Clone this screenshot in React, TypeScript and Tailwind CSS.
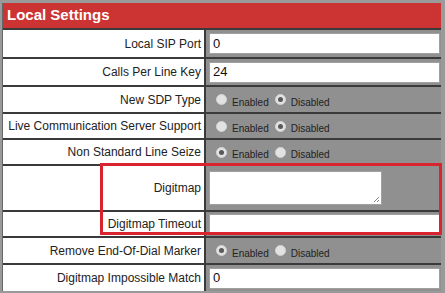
import React from "react";

type Row =
  | { label: string; kind: "input"; value: string; h: string }
  | { label: string; kind: "radio"; enabled: boolean; h: string }
  | { label: string; kind: "textarea"; h: string };

const ROWS: Row[] = [
  { label: "Local SIP Port", kind: "input", value: "0", h: "h-[29px]" },
  { label: "Calls Per Line Key", kind: "input", value: "24", h: "h-[28px]" },
  { label: "New SDP Type", kind: "radio", enabled: false, h: "h-[27px]" },
  { label: "Live Communication Server Support", kind: "radio", enabled: false, h: "h-[26px]" },
  { label: "Non Standard Line Seize", kind: "radio", enabled: true, h: "h-[26px]" },
  { label: "Digitmap", kind: "textarea", h: "h-[46px]" },
  { label: "Digitmap Timeout", kind: "input", value: "", h: "h-[26px]" },
  { label: "Remove End-Of-Dial Marker", kind: "radio", enabled: true, h: "h-[27px]" },
  { label: "Digitmap Impossible Match", kind: "input", value: "0", h: "h-[28px]" },
];

function Radio({ on }: { on: boolean }) {
  return (
    <span className="flex h-[11px] w-[11px] items-center justify-center rounded-full border border-[#d4d4d4] bg-[#e2e2e2]">
      {on && <span className="h-[5px] w-[5px] rounded-full bg-[#5a5a5a]" />}
    </span>
  );
}

function Value({ row }: { row: Row }) {
  if (row.kind === "input") {
    return (
      <div className="flex h-[21px] w-full items-center border border-[#a0a0a0] bg-white px-[3px] text-[13px] text-[#111]">
        {row.value}
      </div>
    );
  }
  if (row.kind === "textarea") {
    return (
      <div className="relative h-[34px] w-[173px] border border-[#a0a0a0] bg-white">
        <svg className="absolute bottom-[1px] right-[1px]" width="7" height="7" viewBox="0 0 7 7">
          <path d="M6 1L1 6M6 4L4 6" stroke="#888" strokeWidth="1" />
        </svg>
      </div>
    );
  }
  return (
    <div className="flex items-center pl-[7px] text-[10px] text-[#222]">
      <Radio on={row.enabled} />
      <span className="mt-[5px] ml-[5px] mr-[6px]">Enabled</span>
      <Radio on={!row.enabled} />
      <span className="mt-[5px] ml-[5px]">Disabled</span>
    </div>
  );
}

export default function App() {
  return (
    <div className="relative h-[293px] w-[445px] overflow-hidden bg-[#9a9a9a] font-['Liberation_Sans',Arial,sans-serif]">
      <div className="ml-[2px] mt-[3px] w-[439px] border-l border-[#666]">
        <div className="flex h-[25px] items-center bg-[#cc3333] pl-[4px] text-[15px] font-bold text-white">
          Local Settings
        </div>
        {ROWS.map((row) => (
          <div key={row.label} className={`grid grid-cols-[203px_1fr] border-t-2 border-[#3a3a3a] ${row.h}`}>
            <div className="flex items-center justify-end border-r-2 border-[#3a3a3a] bg-white pr-[3px] text-[12px] text-[#222]">
              {row.label}
            </div>
            <div className="flex items-center bg-[#909090] pl-[3px] pr-[1px]">
              <Value row={row} />
            </div>
          </div>
        ))}
      </div>
      {/* highlight annotation */}
      <div className="pointer-events-none absolute left-[100px] top-[163px] h-[72px] w-[342px] border-[3px] border-[#d9232e]" />
    </div>
  );
}
